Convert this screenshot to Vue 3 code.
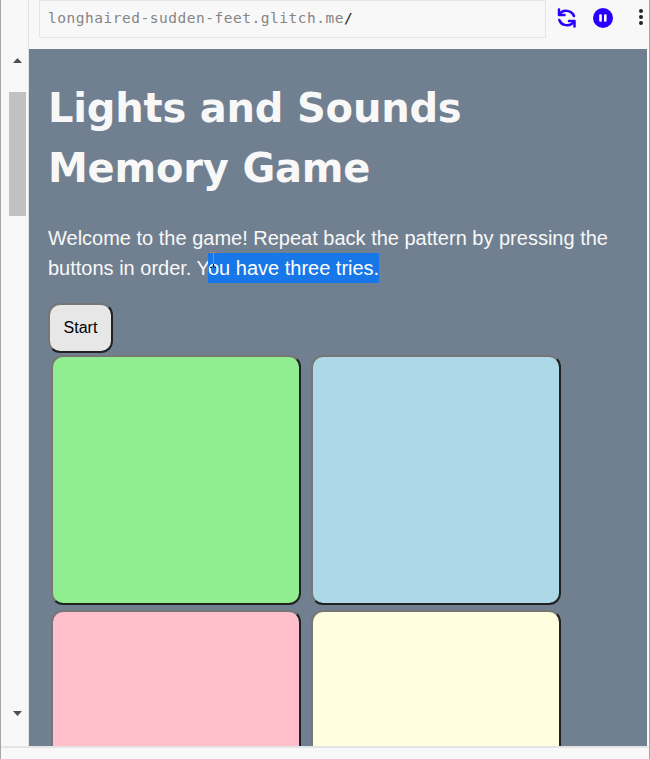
<script setup>
const pads = ['lightgreen', 'lightblue', 'pink', 'lightyellow']
</script>

<template>
  <div class="window">
    <div class="main">
      <aside class="gutter">
        <svg class="arrow" viewBox="0 0 9 5"><path d="M0 5 4.500 0 9 5z" /></svg>
        <div class="track"><div class="thumb"></div></div>
        <svg class="arrow" viewBox="0 0 9 5"><path d="M0 0h9L4.500 5z" /></svg>
      </aside>
      <section class="preview">
        <header class="bar">
          <div class="url"><span>longhaired-sudden-feet.glitch.me</span><b>/</b></div>
          <svg class="refresh" viewBox="0 0 19 20">
            <path d="M2 1.500V7H7.500" />
            <path d="M2.500 6.500C4.500 3 8 2.200 11.500 3.100C14 3.700 16 5.300 17 8" />
            <path d="M17.500 18.500V13H12" />
            <path d="M17 13.500C14.500 17 11 17.800 7.500 16.900C5 16.300 3.300 14.700 2.300 12" />
          </svg>
          <svg class="pause" viewBox="0 0 20 20">
            <circle cx="10" cy="10" r="10" />
            <rect x="6.200" y="6.200" width="2.600" height="7.600" rx="1" />
            <rect x="11" y="6.200" width="2.600" height="7.600" rx="1" />
          </svg>
          <svg class="more" viewBox="0 0 4 16">
            <circle cx="2" cy="2" r="2" /><circle cx="2" cy="8" r="2" /><circle cx="2" cy="14" r="2" />
          </svg>
        </header>
        <main class="page">
          <h1>Lights and Sounds<br />Memory Game</h1>
          <p>
            Welcome to the game! Repeat back the pattern by pressing the<br />
            buttons in order. Y<span class="selected">ou have three tries.<svg class="caret" viewBox="0 0 9 16"><path class="stem" d="M1 .5h3m1 0h3M4.500 .5V12" /><path class="foot" d="M1 15.500h2m2.500 0H7M4.500 12v3" /></svg></span>
          </p>
          <button class="start">Start</button>
          <div class="pads">
            <button v-for="pad in pads" :key="pad" class="pad" :class="pad"></button>
          </div>
        </main>
      </section>
    </div>
    <footer class="footer"></footer>
  </div>
</template>

<style>
body {
  overflow: hidden;
}
</style>

<style scoped>
* {
  box-sizing: border-box;
}
.window {
  width: 650px;
  height: 759px;
  display: flex;
  flex-direction: column;
  background: #f8f8f8;
  border-left: 1px solid #a6a6a6;
  border-right: 1px solid #a6a6a6;
  overflow: hidden;
}
.main {
  height: 746px;
  flex: none;
  display: flex;
}
.gutter {
  width: 28px;
  flex: none;
  border-right: 1px solid #e2e2e2;
  display: flex;
  flex-direction: column;
  padding: 58px 2px 30px 8px;
}
.arrow {
  width: 9px;
  height: 5px;
  margin-left: 4px;
  flex: none;
  fill: #505050;
}
.track {
  flex: 1;
  padding-top: 29px;
}
.thumb {
  width: 17px;
  height: 124px;
  background: #c1c1c1;
}
.preview {
  width: 620px;
  display: flex;
  flex-direction: column;
}
.bar {
  height: 49px;
  flex: none;
  display: flex;
  align-items: flex-start;
  padding-left: 10px;
}
.url {
  width: 507px;
  height: 38px;
  flex: none;
  border: 1px solid #e5e5e5;
  padding-left: 8px;
  font: 14.5px/34px "DejaVu Sans Mono", monospace;
  letter-spacing: 0.52px;
  color: #858585;
  white-space: pre;
}
.url b {
  font-weight: 400;
  color: #222;
}
.refresh {
  width: 19px;
  height: 20px;
  margin: 7.500px 0 0 11px;
  fill: none;
  stroke: #2800ff;
  stroke-width: 2.5;
  stroke-linecap: round;
  stroke-linejoin: round;
}
.pause {
  width: 20px;
  height: 20px;
  margin: 7.500px 0 0 16.500px;
  fill: #2800ff;
}
.pause rect {
  fill: #fff;
}
.more {
  width: 4px;
  height: 16px;
  margin: 9px 0 0 26.500px;
  fill: #222;
}
.page {
  width: 618px;
  height: 697px;
  background: slategray;
  padding: 29px 19px 0;
  overflow: hidden;
  color: #f8f8f8;
  font: 20px/30px "Liberation Sans", Arial, sans-serif;
}
h1 {
  margin: 0 0 25px;
  font: bold 40px/60px "DejaVu Sans", Verdana, sans-serif;
  letter-spacing: -0.2px;
  white-space: nowrap;
}
p {
  margin: 0 0 20px;
  white-space: nowrap;
}
.selected {
  position: relative;
  display: inline-block;
  height: 30px;
  margin-left: -2px;
  background: #1877e8;
  color: #fff;
  vertical-align: top;
}
.caret {
  position: absolute;
  left: 1px;
  top: -1px;
  width: 9px;
  height: 16px;
  fill: none;
  stroke-width: 1;
}
.stem {
  stroke: #b08a60;
}
.foot {
  stroke: #111;
}
.start {
  display: block;
  width: 65px;
  height: 50px;
  padding: 0;
  border: 2px solid;
  border-color: #767676 #212121 #212121 #767676;
  border-radius: 12px;
  background: #e7e7e7;
  color: #000;
  font: 16px "Liberation Sans", Arial, sans-serif;
}
.pads {
  display: grid;
  grid-template-columns: 250px 250px;
  gap: 5px 10px;
  padding: 2px 0 0 3px;
}
.pad {
  height: 250px;
  border: 2px solid;
  border-color: #767676 #212121 #212121 #767676;
  border-radius: 12px;
  padding: 0;
}
.lightgreen {
  background: lightgreen;
}
.lightblue {
  background: #add8e6;
}
.pink {
  background: pink;
}
.lightyellow {
  background: lightyellow;
}
.footer {
  flex: 1;
  border-top: 2px solid #e5e5e5;
}
</style>
